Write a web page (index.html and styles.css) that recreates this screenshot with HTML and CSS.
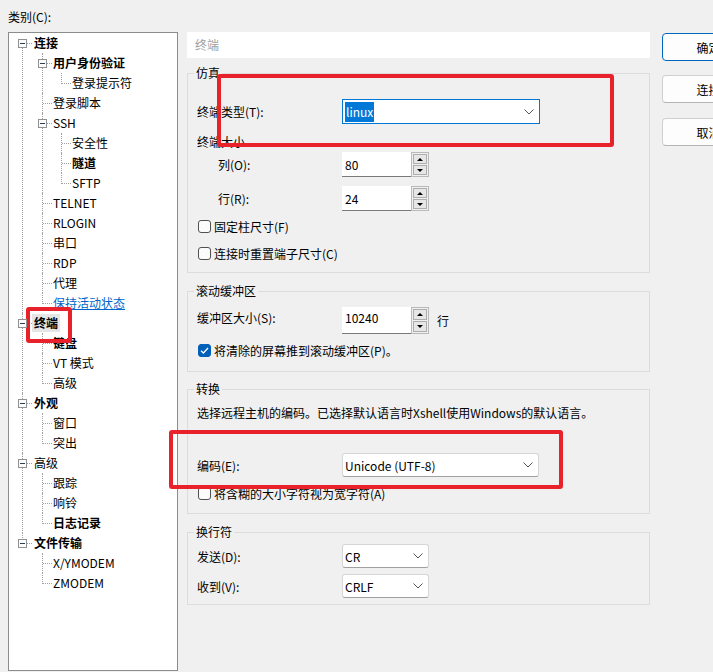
FILE: index.html
```html
<!DOCTYPE html>
<html lang="zh-CN">
<head>
    <meta charset="UTF-8">
    <title>终端 属性</title>
    <link rel="stylesheet" href="styles.css">
</head>
<body>
    <div class="dialog">
        <!-- 类别 -->
        <div class="side">
            <div class="side-label">类别(C):</div>
            <div class="tree">
                <ul>
                    <li class="first">
                        <div class="row"><span class="tog"></span><span class="lbl b">连接</span></div>
                        <ul>
                            <li>
                                <div class="row"><span class="tog"></span><span class="lbl b">用户身份验证</span></div>
                                <ul>
                                    <li class="last"><div class="row"><span class="lbl">登录提示符</span></div></li>
                                </ul>
                            </li>
                            <li><div class="row"><span class="lbl">登录脚本</span></div></li>
                            <li>
                                <div class="row"><span class="tog"></span><span class="lbl">SSH</span></div>
                                <ul>
                                    <li><div class="row"><span class="lbl">安全性</span></div></li>
                                    <li><div class="row"><span class="lbl b">隧道</span></div></li>
                                    <li class="last"><div class="row"><span class="lbl">SFTP</span></div></li>
                                </ul>
                            </li>
                            <li><div class="row"><span class="lbl">TELNET</span></div></li>
                            <li><div class="row"><span class="lbl">RLOGIN</span></div></li>
                            <li><div class="row"><span class="lbl">串口</span></div></li>
                            <li><div class="row"><span class="lbl">RDP</span></div></li>
                            <li><div class="row"><span class="lbl">代理</span></div></li>
                            <li class="last"><div class="row"><span class="lbl link">保持活动状态</span></div></li>
                        </ul>
                    </li>
                    <li>
                        <div class="row"><span class="tog"></span><span class="lbl b sel">终端</span></div>
                        <ul>
                            <li><div class="row"><span class="lbl b">键盘</span></div></li>
                            <li><div class="row"><span class="lbl">VT 模式</span></div></li>
                            <li class="last"><div class="row"><span class="lbl">高级</span></div></li>
                        </ul>
                    </li>
                    <li>
                        <div class="row"><span class="tog"></span><span class="lbl b">外观</span></div>
                        <ul>
                            <li><div class="row"><span class="lbl">窗口</span></div></li>
                            <li class="last"><div class="row"><span class="lbl">突出</span></div></li>
                        </ul>
                    </li>
                    <li>
                        <div class="row"><span class="tog"></span><span class="lbl">高级</span></div>
                        <ul>
                            <li><div class="row"><span class="lbl">跟踪</span></div></li>
                            <li><div class="row"><span class="lbl">响铃</span></div></li>
                            <li class="last"><div class="row"><span class="lbl b">日志记录</span></div></li>
                        </ul>
                    </li>
                    <li class="last">
                        <div class="row"><span class="tog"></span><span class="lbl b">文件传输</span></div>
                        <ul>
                            <li><div class="row"><span class="lbl">X/YMODEM</span></div></li>
                            <li class="last"><div class="row"><span class="lbl">ZMODEM</span></div></li>
                        </ul>
                    </li>
                </ul>
            </div>
        </div>

        <!-- 终端 设置 -->
        <div class="main">
            <div class="title">终端</div>

            <fieldset class="grp grp-emu">
                <legend>仿真</legend>
                <div class="field f-type">
                    <span class="lab">终端类型(T):</span>
                    <div class="combo focus w-type">
                        <span><span class="hl">linux</span></span>
                        <svg width="10" height="6" viewBox="0 0 10 6"><polyline points="0.5,0.5 5,5 9.5,0.5" fill="none" stroke="#555" stroke-width="1"/></svg>
                    </div>
                </div>
                <div class="sub">终端大小</div>
                <div class="field ind f-col">
                    <span class="lab">列(O):</span>
                    <div class="spin">
                        <div class="spin-input">80</div>
                        <div class="spin-btns"><span class="up"></span><span class="down"></span></div>
                    </div>
                </div>
                <div class="field ind f-row">
                    <span class="lab">行(R):</span>
                    <div class="spin">
                        <div class="spin-input">24</div>
                        <div class="spin-btns"><span class="up"></span><span class="down"></span></div>
                    </div>
                </div>
                <div class="check c-fixed"><span class="box"></span>固定柱尺寸(F)</div>
                <div class="check c-reset"><span class="box"></span>连接时重置端子尺寸(C)</div>
            </fieldset>

            <fieldset class="grp grp-scroll">
                <legend>滚动缓冲区</legend>
                <div class="field f-buf">
                    <span class="lab">缓冲区大小(S):</span>
                    <div class="spin">
                        <div class="spin-input">10240</div>
                        <div class="spin-btns"><span class="up"></span><span class="down"></span></div>
                    </div>
                    <span class="unit">行</span>
                </div>
                <div class="check c-push">
                    <span class="box on"><svg width="11" height="11" viewBox="0 0 11 11"><polyline points="2,5.8 4.4,8 9,3" fill="none" stroke="#fff" stroke-width="1.3"/></svg></span>将清除的屏幕推到滚动缓冲区(P)。
                </div>
            </fieldset>

            <fieldset class="grp grp-conv">
                <legend>转换</legend>
                <div class="desc">选择远程主机的编码。已选择默认语言时Xshell使用Windows的默认语言。</div>
                <div class="field f-enc">
                    <span class="lab">编码(E):</span>
                    <div class="combo w-enc">
                        <span>Unicode (UTF-8)</span>
                        <svg width="10" height="6" viewBox="0 0 10 6"><polyline points="0.5,0.5 5,5 9.5,0.5" fill="none" stroke="#555" stroke-width="1"/></svg>
                    </div>
                </div>
                <div class="check c-wide"><span class="box"></span>将含糊的大小字符视为宽字符(A)</div>
            </fieldset>

            <fieldset class="grp grp-eol">
                <legend>换行符</legend>
                <div class="field f-send">
                    <span class="lab">发送(D):</span>
                    <div class="combo w-eol">
                        <span>CR</span>
                        <svg width="10" height="6" viewBox="0 0 10 6"><polyline points="0.5,0.5 5,5 9.5,0.5" fill="none" stroke="#555" stroke-width="1"/></svg>
                    </div>
                </div>
                <div class="field f-recv">
                    <span class="lab">收到(V):</span>
                    <div class="combo w-eol">
                        <span>CRLF</span>
                        <svg width="10" height="6" viewBox="0 0 10 6"><polyline points="0.5,0.5 5,5 9.5,0.5" fill="none" stroke="#555" stroke-width="1"/></svg>
                    </div>
                </div>
            </fieldset>
        </div>

        <!-- 按钮 -->
        <div class="actions">
            <button class="btn default">确定</button>
            <button class="btn b-conn">连接</button>
            <button class="btn b-cancel">取消</button>
        </div>
    </div>

    <!-- 标注框 -->
    <div class="mark mark-tree"></div>
    <div class="mark mark-type"></div>
    <div class="mark mark-enc"></div>
</body>
</html>
```

FILE: styles.css
```css
* {
    box-sizing: border-box;
}

body {
    margin: 0;
    height: 672px;
    overflow: hidden;
    position: relative;
    background: #f0f0f0;
    font-family: "Noto Sans CJK SC", sans-serif;
    font-size: 12px;
    color: #000;
}

.dialog {
    display: flex;
    padding: 9px 0 0 8px;
}

/* 左侧 类别树 */
.side {
    width: 170px;
    flex: none;
}

.side-label {
    height: 23px;
    line-height: 16px;
}

.tree {
    height: 639px;
    background: #fff;
    border: 1px solid #8c8c8c;
}

.tree ul {
    list-style: none;
    margin: 0;
    padding: 0;
}

.tree > ul {
    padding-left: 13px;
}

.tree li {
    position: relative;
}

.tree li ul {
    margin-left: 20px;
}

.tree li li ul {
    margin-left: 19px;
}

.tree li::before {
    content: "";
    position: absolute;
    left: 0;
    top: 0;
    bottom: 0;
    border-left: 1px dotted #a0a0a0;
}

.tree li.last::before {
    bottom: auto;
    height: 11px;
}

.tree li.first::before {
    top: 10px;
}

.tree li::after {
    content: "";
    position: absolute;
    left: 1px;
    top: 10px;
    width: 9px;
    border-top: 1px dotted #a0a0a0;
}

.row {
    height: 20px;
    display: flex;
    align-items: center;
    padding-left: 12px;
    white-space: nowrap;
}

.tree li li .row {
    padding-left: 11px;
}

.tog {
    position: absolute;
    left: -4px;
    top: 6px;
    width: 9px;
    height: 9px;
    border: 1px solid #919191;
    background: #fbfbfb;
    z-index: 1;
}

.tog::after {
    content: "";
    position: absolute;
    left: 1px;
    top: 3px;
    width: 5px;
    height: 1px;
    background: #2b3e5a;
}

.lbl {
    line-height: 16px;
}

.b {
    font-weight: bold;
}

.sel {
    background: #e5e5e5;
    margin-left: -2px;
    padding: 0 2px;
    line-height: 18px;
}

.link {
    color: #0066cc;
    text-decoration: underline;
}

/* 中间 设置区 */
.main {
    width: 463px;
    flex: none;
    margin-left: 9px;
    padding-top: 23px;
}

.title {
    height: 26px;
    line-height: 26px;
    padding-left: 8px;
    background: #fff;
    color: #a0a0a0;
}

.grp {
    margin: 10px 0 0;
    padding: 0 0 8px 6px;
    border: 1px solid #dcdcdc;
    min-width: 0;
}

.grp legend {
    margin: 0;
    padding: 0 2px;
    line-height: 16px;
}

.grp-emu {
    margin-top: 7px;
    padding-bottom: 9px;
}

.grp-scroll {
    padding-bottom: 11px;
}

.grp-conv {
    margin-top: 9px;
    padding-bottom: 10px;
}

.grp-eol {
    padding-bottom: 6px;
}

.field {
    display: flex;
    align-items: center;
    padding-left: 3px;
}

.field .lab {
    width: 145px;
    flex: none;
}

.field.ind .lab {
    padding-left: 21px;
}

.sub {
    margin-top: 10px;
    padding-left: 3px;
    line-height: 16px;
}

.desc {
    margin-top: 8px;
    padding-left: 3px;
    line-height: 16px;
    white-space: nowrap;
}

.f-type { margin-top: 18px; height: 25px; }
.f-col { margin-top: 2px; height: 25px; }
.f-row { margin-top: 9px; height: 25px; }
.f-enc { margin-top: 32px; height: 24px; }
.f-send { margin-top: 4px; height: 24px; }
.f-recv { margin-top: 6px; height: 24px; }

.f-buf {
    margin-top: 8px;
    height: 27px;
    align-items: flex-start;
}

.f-buf .lab {
    line-height: 22px;
}

.f-buf .spin-input {
    align-items: flex-start;
    line-height: 22px;
}

.check {
    display: flex;
    align-items: center;
    gap: 3px;
    height: 20px;
    padding-left: 4px;
}

.c-fixed { margin-top: 5px; }
.c-reset { margin-top: 7px; }
.c-push { margin-top: 6px; }
.c-wide { margin-top: 6px; }

.box {
    width: 13px;
    height: 13px;
    flex: none;
    display: flex;
    align-items: center;
    justify-content: center;
    border: 1px solid #505050;
    border-radius: 3px;
    background: #fbfbfb;
}

.box.on {
    background: #005fb8;
    border-color: #005fb8;
}

/* 下拉框 */
.combo {
    height: 100%;
    display: flex;
    align-items: center;
    justify-content: space-between;
    padding: 0 5px 0 2px;
    background: #fff;
    border: 1px solid #d6d6d6;
    border-bottom-color: #a0a0a0;
    border-radius: 3px;
}

.combo.focus {
    border-color: #0078d4;
    border-radius: 0;
}

.w-type { width: 198px; }
.w-enc { width: 197px; }
.w-eol { width: 87px; }

.hl {
    background: #0078d7;
    color: #fff;
    padding: 1px 1px 2px;
}

/* 数字框 */
.spin {
    display: flex;
    height: 100%;
}

.spin-input {
    width: 69px;
    display: flex;
    align-items: center;
    padding-left: 3px;
    background: #fff;
    border-bottom: 1px solid #7a7a7a;
}

.spin-btns {
    width: 18px;
    display: flex;
    flex-direction: column;
    gap: 1px;
    padding: 1px;
    border: 1px solid #b9b9b9;
}

.spin-btns span {
    flex: 1;
    display: flex;
    align-items: center;
    justify-content: center;
    background: #e6e6e6;
    border: 1px solid #adadad;
}

.spin-btns .up::after {
    content: "";
    border-left: 3px solid transparent;
    border-right: 3px solid transparent;
    border-bottom: 3px solid #000;
}

.spin-btns .down::after {
    content: "";
    border-left: 3px solid transparent;
    border-right: 3px solid transparent;
    border-top: 3px solid #000;
}

.unit {
    margin-left: 8px;
    align-self: center;
}

/* 右侧 按钮 */
.actions {
    display: flex;
    flex-direction: column;
    margin-left: 12px;
    padding-top: 24px;
}

.btn {
    width: 93px;
    height: 28px;
    flex: none;
    padding: 0;
    font: inherit;
    color: #000;
    background: #fdfdfd;
    border: 1px solid #d0d0d0;
    border-bottom-color: #b5b5b5;
    border-radius: 4px;
}

.btn.default {
    border-color: #0067c0;
    box-shadow: inset 0 0 0 1px #fff;
}

.b-conn { margin-top: 14px; }
.b-cancel { margin-top: 15px; }

/* 红色标注 */
.mark {
    position: absolute;
    border: 4px solid #e8212b;
    border-radius: 3px;
}

.mark-tree {
    left: 26px;
    top: 307px;
    width: 46px;
    height: 36px;
}

.mark-type {
    left: 217px;
    top: 74px;
    width: 397px;
    height: 73px;
}

.mark-enc {
    left: 169px;
    top: 430px;
    width: 394px;
    height: 59px;
}
```
